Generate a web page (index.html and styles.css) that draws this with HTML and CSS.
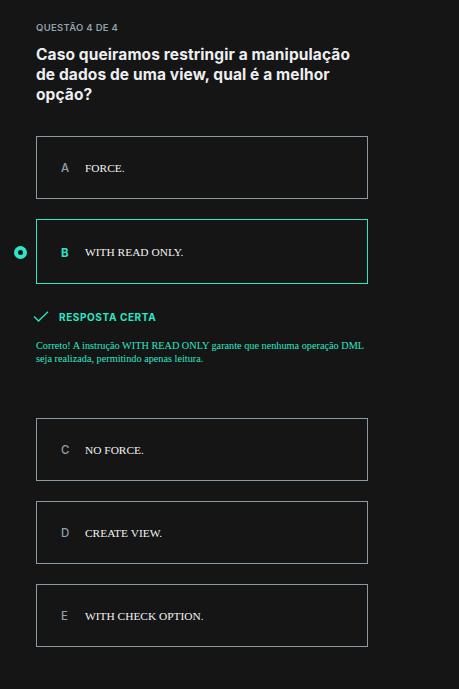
FILE: index.html
```html
<!DOCTYPE html>
<html lang="pt">
<head>
<meta charset="utf-8">
<link rel="stylesheet" href="styles.css">
</head>
<body>
<main class="quiz">
  <p class="counter">QUESTÃO 4 DE 4</p>
  <h1 class="question">Caso queiramos restringir a manipulação de dados de uma view, qual é a melhor opção?</h1>

  <div class="option">
    <span class="letter">A</span>
    <span class="text">FORCE.</span>
  </div>

  <div class="option selected">
    <span class="radio"></span>
    <span class="letter">B</span>
    <span class="text">WITH READ ONLY.</span>
  </div>

  <div class="feedback">
    <div class="feedback-title">
      <svg class="check" width="16" height="11" viewBox="0 0 16 11"><path d="M1 5.5 L5.5 10 L15 0.8" fill="none" stroke="#2ee6c6" stroke-width="1.3"/></svg>
      <span>RESPOSTA CERTA</span>
    </div>
    <p class="feedback-text">Correto! A instrução WITH READ ONLY garante que nenhuma operação DML seja realizada, permitindo apenas leitura.</p>
  </div>

  <div class="option">
    <span class="letter">C</span>
    <span class="text">NO FORCE.</span>
  </div>

  <div class="option">
    <span class="letter">D</span>
    <span class="text">CREATE VIEW.</span>
  </div>

  <div class="option">
    <span class="letter">E</span>
    <span class="text">WITH CHECK OPTION.</span>
  </div>
</main>
</body>
</html>
```
FILE: styles.css
```css
html, body {
  margin: 0;
  padding: 0;
  background: #151515;
}
.quiz {
  width: 332px;
  padding: 22px 0 40px 36px;
  font-family: Inter, "Noto Sans", sans-serif;
}
.counter {
  margin: 0;
  font-size: 9.5px;
  font-weight: 600;
  letter-spacing: 0.3px;
  color: #8fa0ab;
  line-height: 11px;
}
.question {
  margin: 12px 0 0;
  font-size: 15.5px;
  font-weight: 700;
  line-height: 20px;
  color: #eceff1;
  width: 320px;
  letter-spacing: 0.1px;
}
.option {
  position: relative;
  display: flex;
  align-items: center;
  height: 61px;
  border: 1px solid #8a9ba6;
  margin-top: 20px;
  padding-left: 24px;
}
.question + .option {
  margin-top: 31px;
}
.option.selected {
  border-color: #2ee6c6;
  height: 63px;
}
.letter {
  width: 24px;
  font-size: 11.5px;
  color: #8fa0ab;
  font-weight: 500;
}
.selected .letter {
  color: #2ee6c6;
  font-weight: 700;
  padding-top: 2px;
}
.text {
  font-family: "Liberation Serif", "Times New Roman", serif;
  font-size: 11.4px;
  color: #f2f2f2;
}
.radio {
  position: absolute;
  left: -23px;
  top: 26px;
  width: 5px;
  height: 5px;
  border: 4px solid #2ee6c6;
  border-radius: 50%;
}
.feedback {
  margin-top: 26px;
  margin-bottom: 53px;
}
.feedback + .option {
  margin-top: 0;
}
.feedback-title {
  display: flex;
  align-items: center;
  gap: 10px;
  margin-left: -3px;
  height: 14px;
  font-size: 10px;
  font-weight: 700;
  letter-spacing: 0.6px;
  color: #2ee6c6;
}
.check {
  margin-top: -2px;
}
.feedback-text {
  margin: 15px 0 0;
  font-family: "Liberation Serif", "Times New Roman", serif;
  font-size: 10.25px;
  line-height: 13px;
  color: #2ee6c6;
}
```
